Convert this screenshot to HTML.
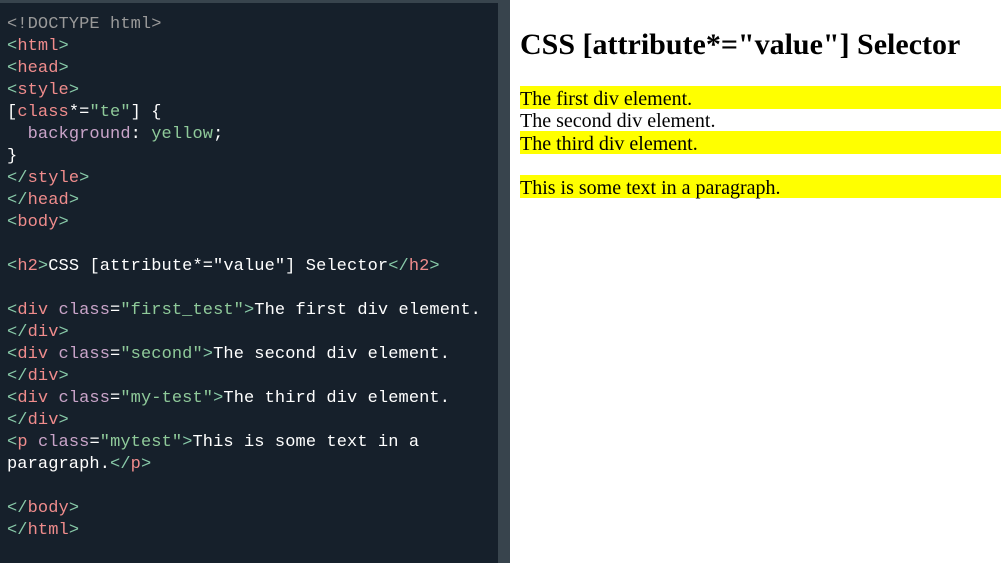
<!DOCTYPE html>
<html><head><style>
body{margin:0;width:1008px;height:563px;overflow:hidden;position:relative;background:#fff}
#l{position:absolute;left:0;top:0;width:498px;height:563px;background:#16202b;border-top:3px solid #38444d;box-sizing:border-box}
#d{position:absolute;left:498px;top:0;width:12px;height:563px;background:#38444d}
pre{margin:0;padding:11px 0 0 7px;font-family:"Liberation Mono",monospace;font-size:17px;line-height:22px;color:#fff;letter-spacing:0.1px}
.b{color:#88c9a8}.t{color:#f08c8c}.a{color:#c9a4c9}.v{color:#8fca9a}.g{color:#999}
#r{position:absolute;left:510px;top:0;width:498px;height:563px;font-family:"Liberation Serif",serif;font-size:20px;line-height:22.5px;color:#000}
h2{font-size:30px;margin:0;position:absolute;left:10px;top:28px;line-height:34px}
.y{position:absolute;left:10px;width:481px;height:22.5px;box-sizing:border-box;padding-top:1.5px;line-height:22px}
</style></head><body>
<div id="l"><pre><span class="g">&lt;!DOCTYPE html&gt;</span>
<span class="b">&lt;</span><span class="t">html</span><span class="b">&gt;</span>
<span class="b">&lt;</span><span class="t">head</span><span class="b">&gt;</span>
<span class="b">&lt;</span><span class="t">style</span><span class="b">&gt;</span>
[<span class="t">class</span>*=<span class="v">"te"</span>] {
  <span class="a">background</span>: <span class="v">yellow</span>;
}
<span class="b">&lt;/</span><span class="t">style</span><span class="b">&gt;</span>
<span class="b">&lt;/</span><span class="t">head</span><span class="b">&gt;</span>
<span class="b">&lt;</span><span class="t">body</span><span class="b">&gt;</span>

<span class="b">&lt;</span><span class="t">h2</span><span class="b">&gt;</span>CSS [attribute*="value"] Selector<span class="b">&lt;/</span><span class="t">h2</span><span class="b">&gt;</span>

<span class="b">&lt;</span><span class="t">div</span> <span class="a">class</span>=<span class="v">"first_test"</span><span class="b">&gt;</span>The first div element.
<span class="b">&lt;/</span><span class="t">div</span><span class="b">&gt;</span>
<span class="b">&lt;</span><span class="t">div</span> <span class="a">class</span>=<span class="v">"second"</span><span class="b">&gt;</span>The second div element.
<span class="b">&lt;/</span><span class="t">div</span><span class="b">&gt;</span>
<span class="b">&lt;</span><span class="t">div</span> <span class="a">class</span>=<span class="v">"my-test"</span><span class="b">&gt;</span>The third div element.
<span class="b">&lt;/</span><span class="t">div</span><span class="b">&gt;</span>
<span class="b">&lt;</span><span class="t">p</span> <span class="a">class</span>=<span class="v">"mytest"</span><span class="b">&gt;</span>This is some text in a
paragraph.<span class="b">&lt;/</span><span class="t">p</span><span class="b">&gt;</span>

<span class="b">&lt;/</span><span class="t">body</span><span class="b">&gt;</span>
<span class="b">&lt;/</span><span class="t">html</span><span class="b">&gt;</span></pre></div>
<div id="d"></div>
<div id="r">
<h2>CSS [attribute*="value"] Selector</h2>
<div class="y" style="top:86px;background:#ff0">The first div element.</div>
<div class="y" style="top:108.5px">The second div element.</div>
<div class="y" style="top:131px;background:#ff0">The third div element.</div>
<div class="y" style="top:175px;background:#ff0">This is some text in a paragraph.</div>
</div>
</body></html>
